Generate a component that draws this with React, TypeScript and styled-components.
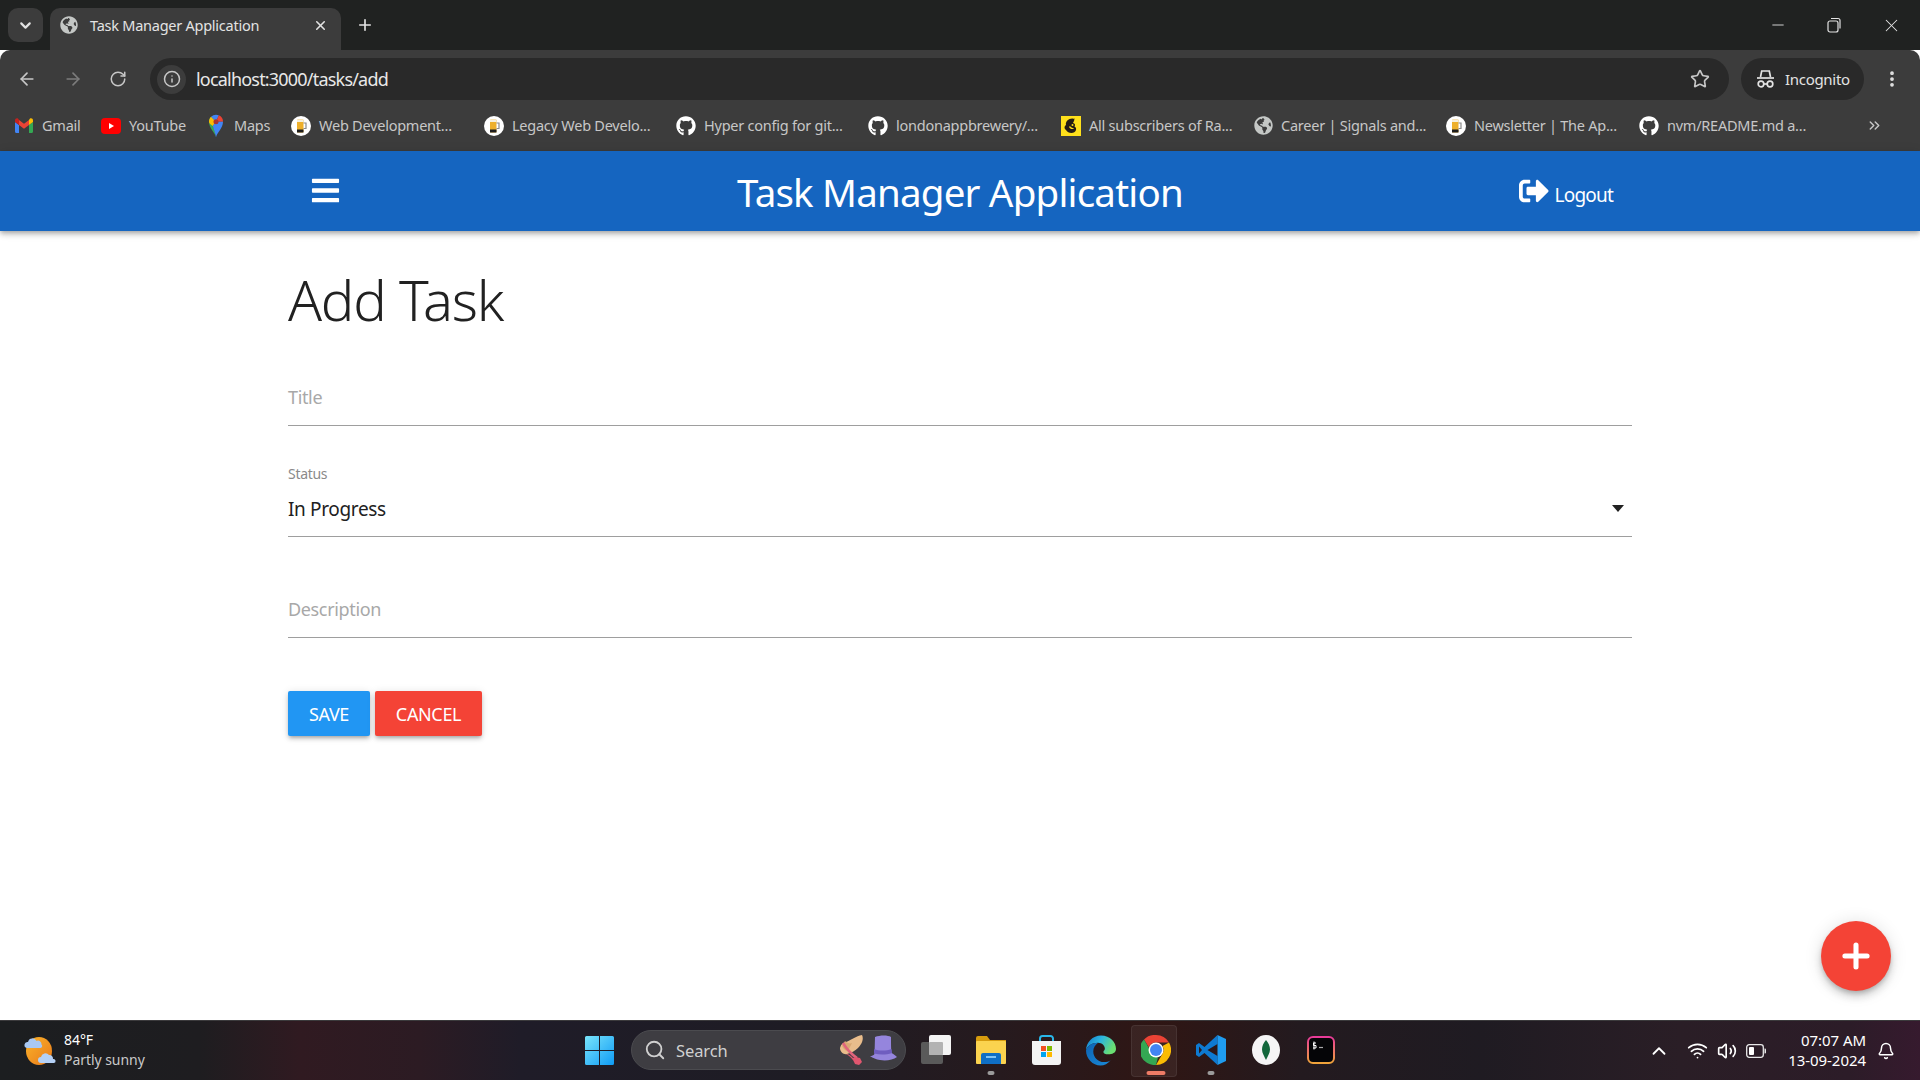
import React from 'react'
import styled, { createGlobalStyle } from 'styled-components'
import {
  ArrowLeft,
  ArrowRight,
  Bell,
  ChevronDown,
  ChevronUp,
  ChevronsRight,
  Info,
  Minus,
  MoreVertical,
  Plus,
  RotateCw,
  Search,
  Star,
  Volume2,
  Wifi,
  X,
} from 'lucide-react'
import { FaBars, FaGithub, FaGlobeAmericas, FaSignOutAlt } from 'react-icons/fa'

const UI_FONT = `'Noto Sans', 'Open Sans', sans-serif`

const GlobalStyle = createGlobalStyle`
  html, body {
    margin: 0;
    padding: 0;
    background: #fff;
    font-family: ${UI_FONT};
    overflow: hidden;
  }
  * { box-sizing: border-box; }
`

const Screen = styled.div`
  width: 1920px;
  height: 1080px;
  display: flex;
  flex-direction: column;
  overflow: hidden;
`

/* browser chrome */
const TabStrip = styled.div`
  height: 50px;
  flex: none;
  background: #202221;
  display: flex;
  align-items: flex-end;
  padding-left: 8px;
  color: #e3e3e3;
`
const TabSearch = styled.div`
  width: 35px;
  height: 34px;
  margin-bottom: 8px;
  border-radius: 10px;
  background: #3c3c3c;
  display: flex;
  align-items: center;
  justify-content: center;
`
const Tab = styled.div`
  width: 291px;
  height: 42px;
  margin-left: 7px;
  border-radius: 10px 10px 0 0;
  background: #3c3c3c;
  display: flex;
  align-items: center;
  padding: 0 13px 8px 10px;
  font-size: 14.5px;
  letter-spacing: -0.25px;
`
const TabTitle = styled.span`
  flex: 1;
  margin-left: 12px;
  white-space: nowrap;
`
const NewTab = styled.div`
  margin: 0 0 16px 15px;
  display: flex;
`
const WindowControls = styled.div`
  margin-left: auto;
  height: 50px;
  display: flex;
  align-items: center;
  gap: 39px;
  padding-right: 18px;
`
const RestoreIcon = () => (
  <svg width="16" height="18" viewBox="0 0 16 18" fill="none" stroke="#e3e3e3" strokeWidth="1.2">
    <rect x="2" y="5" width="10" height="11" rx="2" />
    <path d="M5 2.5h7a2 2 0 0 1 2 2v8" />
  </svg>
)

const Toolbar = styled.div`
  height: 50px;
  flex: none;
  background: #3c3c3c;
  border-radius: 10px 10px 0 0;
  display: flex;
  align-items: flex-start;
  padding-top: 8px;
  color: #c7c7c7;
`
const NavButtons = styled.div`
  width: 150px;
  height: 42px;
  display: flex;
  align-items: center;
  padding-left: 17px;
  gap: 26px;
  flex: none;
`
const AddressBar = styled.div`
  width: 1579px;
  height: 42px;
  border-radius: 21px;
  background: #292929;
  display: flex;
  align-items: center;
  padding: 0 19px 0 7px;
`
const InfoChip = styled.div`
  width: 29px;
  height: 29px;
  border-radius: 50%;
  background: #3c3c3c;
  display: flex;
  align-items: center;
  justify-content: center;
  flex: none;
`
const Url = styled.span`
  flex: 1;
  margin-left: 10px;
  font-size: 18px;
  letter-spacing: -0.8px;
  color: #e8e8e8;
`
const IncognitoPill = styled.div`
  width: 123px;
  height: 42px;
  margin-left: 12px;
  border-radius: 21px;
  background: #292929;
  display: flex;
  align-items: center;
  padding-left: 15px;
  gap: 10px;
  font-size: 15px;
  letter-spacing: -0.3px;
  color: #e3e3e3;
`
const MoreButton = styled.div`
  height: 42px;
  margin-left: 18px;
  display: flex;
  align-items: center;
  color: #e3e3e3;
`
const IncognitoIcon = () => (
  <svg width="19" height="20" viewBox="0 0 19 20" fill="none" stroke="#e3e3e3" strokeWidth="1.7">
    <path d="M4.5 8l1.2-6h7.6l1.2 6" />
    <path d="M1 9h17" />
    <circle cx="5" cy="15" r="2.8" />
    <circle cx="14" cy="15" r="2.8" />
    <path d="M7.8 15h3.4" />
  </svg>
)

const BookmarkBar = styled.div`
  height: 51px;
  flex: none;
  background: #3c3c3c;
  display: flex;
  align-items: center;
  padding-left: 14px;
`
const Bookmark = styled.div<{ $w: number }>`
  width: ${({ $w }) => $w}px;
  flex: none;
  display: flex;
  align-items: center;
`
const BookmarkIcon = styled.div`
  width: 20px;
  height: 20px;
  flex: none;
  display: flex;
  align-items: center;
  justify-content: center;
  color: #fff;
`
const BookmarkLabel = styled.span`
  margin-left: 8px;
  margin-top: -2px;
  font-size: 14.5px;
  letter-spacing: -0.24px;
  color: #c7c7c7;
  white-space: nowrap;
`
const OverflowButton = styled.div`
  margin-left: auto;
  margin-right: 37px;
  display: flex;
  color: #c7c7c7;
`

const GmailIcon = () => (
  <svg width="18" height="15" viewBox="0 0 18 15">
    <path d="M1 15h3V7L0 4v9.5A1.5 1.5 0 0 0 1 15z" fill="#4285f4" />
    <path d="M14 15h3a1.5 1.5 0 0 0 1-1.5V4l-4 3z" fill="#34a853" />
    <path d="M14 2v5l4-3V2.2C18 .6 16.2-.3 15 .6z" fill="#fbbc04" />
    <path d="M4 7V2l5 3.8L14 2v5l-5 3.8z" fill="#ea4335" />
    <path d="M0 2.2V4l4 3V2L3 .6C1.8-.3 0 .6 0 2.2z" fill="#c5221f" />
  </svg>
)
const YoutubeIcon = () => (
  <svg width="20" height="16" viewBox="0 0 20 16">
    <rect width="20" height="16" rx="4" fill="#f00" />
    <path d="M8 5l5 3-5 3z" fill="#fff" />
  </svg>
)
const MapsIcon = () => (
  <svg width="14" height="24" viewBox="0 0 15 24">
    <path d="M7.5 24C6.5 19 0 14.5 0 7.5c0-2 .8-3.9 2.2-5.3L7.5 7.5 4 12c1.5 3 2.8 6 3.5 12z" fill="#34a853" />
    <path d="M2.2 2.2L7.5 7.5 4 12C2 10.5 0 9.5 0 7.5c0-2 .8-3.9 2.2-5.3z" fill="#fbbc04" />
    <path d="M2.2 2.2A7.5 7.5 0 0 1 7.5 0c1 0 2 .2 3 .6L7.5 7.5z" fill="#4285f4" />
    <path d="M10.5 .6A7.5 7.5 0 0 1 15 7.5L7.5 7.5z" fill="#ea4335" />
    <path d="M15 7.5c0 7-6.5 11.5-7.5 16.5-.4-3-1.5-6-3.5-12l3.5-4.5z" fill="#4285f4" />
    <circle cx="7.5" cy="7.5" r="2.7" fill="#a33" />
  </svg>
)
const BeerIcon = () => (
  <svg width="20" height="20" viewBox="0 0 20 20">
    <circle cx="10" cy="10" r="10" fill="#fff" />
    <rect x="6" y="3.5" width="6.5" height="13" rx="0.8" fill="#eeb02b" />
    <rect x="6" y="3.5" width="6.5" height="2.5" fill="#f7f0dc" />
    <rect x="6" y="13.5" width="6.5" height="3" fill="#1d1d1d" />
    <path d="M12.5 7h2.5v5.5h-2.5" fill="none" stroke="#8a8a8a" strokeWidth="1.2" />
  </svg>
)
const MailchimpIcon = () => (
  <svg width="20" height="20" viewBox="0 0 20 20">
    <rect width="20" height="20" fill="#ffe01b" />
    <path d="M14 3C9 1 4 5 5 9c-2 1-2 4 0 5 2 4 9 4 10 0 .6-2-.5-3-1.5-3.5 1-2 .5-3-1.5-3.5 1-1.5 1.5-3 1.5-4.5z" fill="#241c15" />
    <path d="M8 11c1 2 4 3 5 1-2 0-3-.5-4-2z" fill="#ffe01b" />
    <circle cx="11.5" cy="9" r="1" fill="#ffe01b" />
  </svg>
)

/* app bar */
const AppBar = styled.header`
  height: 80px;
  flex: none;
  background: #1565c0;
  box-shadow: 0 2px 4px -1px rgba(0, 0, 0, 0.2), 0 4px 5px 0 rgba(0, 0, 0, 0.14), 0 1px 10px 0 rgba(0, 0, 0, 0.12);
  position: relative;
  z-index: 1;
  color: #fff;
  display: flex;
  justify-content: center;
`
const AppBarInner = styled.div`
  width: 1344px;
  display: grid;
  grid-template-columns: 1fr auto 1fr;
  align-items: center;
`
const MenuButton = styled.div`
  padding-left: 22px;
  margin-top: -2px;
  display: flex;
`
const AppTitle = styled.div`
  font-size: 38.5px;
  letter-spacing: -0.8px;
  line-height: 1;
  margin-top: 2px;
  white-space: nowrap;
`
const LogoutLink = styled.div`
  justify-self: end;
  margin-right: 19px;
  margin-top: 8px;
  display: flex;
  align-items: center;
  gap: 6px;
  font-size: 19px;
  letter-spacing: -0.8px;
`
const LogoutIcon = styled(FaSignOutAlt)`
  margin-top: -8px;
`

/* form */
const Main = styled.main`
  flex: 1;
  width: 1344px;
  margin: 0 auto;
  padding-top: 26px;
`
const Heading = styled.h1`
  margin: 0;
  font-size: 56px;
  line-height: 84px;
  font-weight: 300;
  letter-spacing: -1.2px;
  color: #212121;
`
const Field = styled.div<{ $h: number; $mt: number }>`
  height: ${({ $h }) => $h}px;
  margin-top: ${({ $mt }) => $mt}px;
  border-bottom: 1px solid #9e9e9e;
  display: flex;
  flex-direction: column;
  justify-content: flex-end;
  position: relative;
`
const Placeholder = styled.span`
  font-size: 18px;
  letter-spacing: -0.35px;
  line-height: 26px;
  padding-bottom: 15px;
  color: #a8a8a8;
`
const FieldLabel = styled.span`
  font-size: 14px;
  letter-spacing: -0.3px;
  line-height: 18px;
  margin-bottom: 13px;
  color: #8a8a8a;
`
const SelectValue = styled.span`
  font-size: 19px;
  letter-spacing: -0.35px;
  line-height: 26px;
  padding-bottom: 14px;
  color: #212121;
`
const SelectArrow = styled.span`
  position: absolute;
  right: 8px;
  bottom: 24px;
  width: 0;
  height: 0;
  border-left: 6.5px solid transparent;
  border-right: 6.5px solid transparent;
  border-top: 7px solid #212121;
`
const Actions = styled.div`
  margin-top: 53px;
  display: flex;
  gap: 5px;
`
const ActionButton = styled.button<{ $bg: string; $w: number }>`
  width: ${({ $w }) => $w}px;
  height: 45px;
  padding: 0;
  border: none;
  border-radius: 2px;
  background: ${({ $bg }) => $bg};
  color: #fff;
  font-family: ${UI_FONT};
  font-size: 18px;
  letter-spacing: -0.35px;
  box-shadow: 0 3px 3px -2px rgba(0, 0, 0, 0.2), 0 3px 4px 0 rgba(0, 0, 0, 0.14), 0 1px 8px 0 rgba(0, 0, 0, 0.12);
`
const Fab = styled.div`
  position: fixed;
  left: 1821px;
  top: 921px;
  width: 70px;
  height: 70px;
  border-radius: 50%;
  background: #f44336;
  color: #fff;
  display: flex;
  align-items: center;
  justify-content: center;
  box-shadow: 0 3px 5px -1px rgba(0, 0, 0, 0.2), 0 6px 10px 0 rgba(0, 0, 0, 0.14), 0 1px 18px 0 rgba(0, 0, 0, 0.12);
`

/* windows taskbar */
const Taskbar = styled.footer`
  height: 60px;
  flex: none;
  border-top: 1px solid #3b3a3c;
  background: linear-gradient(
    90deg,
    #1c1e20 0,
    #1e1d20 200px,
    #301a21 300px,
    #2c1b23 420px,
    #1f1c28 520px,
    #1e1c24 800px,
    #261a1e 1000px,
    #2f1614 1160px,
    #231a1f 1300px,
    #1f1b22 1480px,
    #2a1e26 1680px,
    #2c1c28 1850px,
    #361a2e 1920px
  );
  display: flex;
  align-items: center;
  color: #fff;
`
const Weather = styled.div`
  width: 585px;
  flex: none;
  display: flex;
  align-items: center;
  padding-left: 24px;
  gap: 8px;
`
const WeatherText = styled.div`
  display: flex;
  flex-direction: column;
  margin-top: -2px;
  font-size: 14px;
  letter-spacing: -0.05px;
  line-height: 20px;
`
const WeatherSub = styled.span`
  color: #c9c9c9;
`
const SearchBox = styled.div`
  width: 275px;
  height: 40px;
  margin-left: 17px;
  margin-bottom: 1px;
  border-radius: 20px;
  border: 1px solid #4b4b4f;
  background: #3e3d42;
  display: flex;
  align-items: center;
  padding: 0 7px 0 12px;
  color: #d0d0d0;
  font-size: 16.5px;
  letter-spacing: -0.1px;
  flex: none;
`
const SearchLabel = styled.span`
  flex: 1;
  margin-left: 10px;
`
const TaskIcons = styled.div`
  display: flex;
  gap: 25px;
  margin-left: 15px;
  margin-bottom: 1px;
  flex: none;
`
const TaskSlot = styled.div<{ $active?: boolean }>`
  width: 30px;
  height: 30px;
  position: relative;
  display: flex;
  align-items: center;
  justify-content: center;
  z-index: 0;
  &::before {
    content: '';
    display: ${({ $active }) => ($active ? 'block' : 'none')};
    position: absolute;
    z-index: -1;
    left: -10px;
    top: -10px;
    width: 44px;
    height: 50px;
    border-radius: 4px;
    border: 1px solid rgba(255, 255, 255, 0.07);
    background: rgba(255, 255, 255, 0.06);
  }
`
const TaskDot = styled.span<{ $active?: boolean }>`
  position: absolute;
  left: 50%;
  top: 36px;
  height: 4px;
  width: ${({ $active }) => ($active ? 19 : 7)}px;
  transform: translateX(-50%);
  border-radius: 2px;
  background: ${({ $active }) => ($active ? '#ee7c66' : '#9b9b9b')};
`
const Tray = styled.div`
  margin-left: auto;
  display: flex;
  align-items: center;
  padding-right: 25px;
`
const TrayIcons = styled.div`
  display: flex;
  align-items: center;
  gap: 9px;
  margin-right: 22px;
`
const TrayChevron = styled.div`
  display: flex;
  margin-right: 17px;
`
const Clock = styled.div`
  text-align: right;
  font-size: 15px;
  line-height: 20px;
  letter-spacing: -0.05px;
  margin-top: -2px;
  margin-right: 11px;
`

const WeatherIcon = () => (
  <svg width="32" height="32" viewBox="0 0 32 32">
    <defs>
      <linearGradient id="sun" x1="0" y1="0" x2="1" y2="1">
        <stop offset="0" stopColor="#fbb42a" />
        <stop offset="1" stopColor="#e8791a" />
      </linearGradient>
    </defs>
    <ellipse cx="15" cy="16" rx="13" ry="14" fill="url(#sun)" />
    <path d="M3 13a3 3 0 0 1 1-6 4.5 4.5 0 0 1 8.5-1 3.5 3.5 0 0 1 5 3.5 2 2 0 0 1-1 3.5z" fill="#a9c8f2" />
    <path d="M17 28a3 3 0 0 1 0-6 4.5 4.5 0 0 1 8-2 3.5 3.5 0 0 1 4 4 2 2 0 0 1 1 4z" fill="#b4d0f5" />
  </svg>
)
const StartIcon = () => (
  <svg width="29" height="29" viewBox="0 0 29 29">
    <defs>
      <linearGradient id="win" x1="0" y1="0" x2="1" y2="1">
        <stop offset="0" stopColor="#79e4fb" />
        <stop offset="1" stopColor="#0f9bf5" />
      </linearGradient>
    </defs>
    <path d="M0 1.5A1.5 1.5 0 0 1 1.5 0H14v14H0zM15 0h12.5A1.5 1.5 0 0 1 29 1.5V14H15zM0 15h14v14H1.5A1.5 1.5 0 0 1 0 27.5zM15 15h14v12.5a1.5 1.5 0 0 1-1.5 1.5H15z" fill="url(#win)" />
  </svg>
)
const SearchHats = () => (
  <svg width="60" height="32" viewBox="0 0 60 32">
    <path d="M2 14c1-4 3-5 6-6 5-2 10-6 16-7 2 4 0 9-4 13-3 3-7 5-11 6-3 1-7-2-7-6z" fill="#e9bd8c" />
    <path d="M7 7c2 2 5 3 7 2l-4 8c-3 0-5-3-6-5z" fill="#d9a873" />
    <path d="M5 9c3 5 8 11 14 15" stroke="#e0647c" strokeWidth="2.6" fill="none" />
    <path d="M8 20c4 2 7 5 9 10l4 1 3-3-2-4-5-1-2 1c-2-2-4-4-7-4z" fill="#e0566f" />
    <path d="M37 3c5-2 13-2 16 0 0 6 0 12 .5 16 2 1 3.5 2 5.5 4-4 3-11 4-17 3-4-.5-7-2-10-4 2 0 3.5-.5 4.5-2z" fill="#9585dd" />
    <path d="M36 15c5 2 12 2 17.5 0l.5 4c-6 2-12 2-18 .5z" fill="#6f5dc0" />
  </svg>
)
const TaskViewIcon = () => (
  <svg width="30" height="30" viewBox="0 0 30 30">
    <rect x="0" y="7" width="22" height="22" rx="2" fill="#5a5a5a" />
    <rect x="8" y="0" width="22" height="20" rx="2" fill="#f4f4f4" />
    <rect x="8" y="7" width="14" height="13" rx="1" fill="#b3b3b3" />
  </svg>
)
const ExplorerIcon = () => (
  <svg width="30" height="28" viewBox="0 0 30 28">
    <path d="M0 2a2 2 0 0 1 2-2h9l3 4h16v6H0z" fill="#d79c0e" />
    <rect y="5" width="30" height="23" rx="1" fill="#fbd34f" />
    <path d="M5 28v-9a2 2 0 0 1 2-2h16a2 2 0 0 1 2 2v9z" fill="#0f6fc5" />
    <rect x="10" y="20" width="10" height="2" fill="#7fc4f5" />
  </svg>
)
const StoreIcon = () => (
  <svg width="29" height="30" viewBox="0 0 29 30">
    <path d="M8 8V3.5a2.5 2.5 0 0 1 2.5-2.5h8a2.5 2.5 0 0 1 2.5 2.5V8" fill="none" stroke="#29b6e8" strokeWidth="2" />
    <path d="M0 6h29v21a3 3 0 0 1-3 3H3a3 3 0 0 1-3-3z" fill="#f3f3f3" />
    <rect x="9" y="11" width="5" height="5" fill="#f25022" />
    <rect x="15" y="11" width="5" height="5" fill="#7fba00" />
    <rect x="9" y="17" width="5" height="5" fill="#00a4ef" />
    <rect x="15" y="17" width="5" height="5" fill="#ffb900" />
  </svg>
)
const EdgeIcon = () => (
  <svg width="31" height="31" viewBox="0 0 31 31">
    <defs>
      <linearGradient id="edgeTop" x1="0" y1="0" x2="1" y2="0.4">
        <stop offset="0" stopColor="#1477c9" />
        <stop offset="0.5" stopColor="#2bb5e0" />
        <stop offset="1" stopColor="#6ade72" />
      </linearGradient>
      <linearGradient id="edgeLow" x1="0" y1="0" x2="1" y2="1">
        <stop offset="0" stopColor="#0d62b2" />
        <stop offset="1" stopColor="#1a8ad8" />
      </linearGradient>
    </defs>
    <path d="M15.5 0C25 0 31 7 31 14c0 4-4 5.5-8 5.5-3 0-5-1-5-2.5 0-1.5 1.5-1.5 1.5-3.5 0-3-3-6-7-6C6 7.5 1 11 0 15.5 0 7 7 0 15.5 0z" fill="url(#edgeTop)" />
    <path d="M0 15.5C1 11 6 7.5 12.5 7.5c-3 2-5 5-5 9 0 6 5 11 11 11 3 0 5-.5 7-2-3 3.5-6.5 5.5-10.5 5.5C7 31 0 24 0 15.5z" fill="url(#edgeLow)" />
  </svg>
)
const ChromeIcon = () => (
  <svg width="30" height="30" viewBox="0 0 30 30">
    <path d="M15 0a15 15 0 0 1 13 7.5H15a7.5 7.5 0 0 0-7 5L3 4.5A15 15 0 0 1 15 0z" fill="#ea4335" />
    <path d="M28 7.5A15 15 0 0 1 15 30l6.5-11.3A7.5 7.5 0 0 0 21.5 11z" fill="#fbbc04" />
    <path d="M15 30A15 15 0 0 1 3 4.5l6.5 11.3A7.5 7.5 0 0 0 17 22.3z" fill="#34a853" />
    <circle cx="15" cy="15" r="7.5" fill="#fff" />
    <circle cx="15" cy="15" r="6" fill="#4285f4" />
  </svg>
)
const VscodeIcon = () => (
  <svg width="30" height="30" viewBox="0 0 30 30">
    <path d="M21.5 0L8.5 12 3 8 0 10v10l3 2 5.5-4 13 12v-9l-10-6 10-6z" fill="#0e7ad1" />
    <path d="M3 11.5L6 15l-3 3.5z" fill="#2a1a1e" />
    <path d="M21.5 0L30 4v22l-8.5 4z" fill="#1f9cf0" />
  </svg>
)
const MongoIcon = () => (
  <svg width="30" height="30" viewBox="0 0 30 30">
    <ellipse cx="15" cy="15" rx="14" ry="15" fill="#f5f5f5" />
    <path d="M15 5c2.5 3 4 6 4 9.5 0 3.5-2.5 7-4 10.5-1.5-3.5-4-7-4-10.5C11 11 12.5 8 15 5z" fill="#13683c" />
  </svg>
)
const TerminalIcon = () => (
  <svg width="30" height="30" viewBox="0 0 30 30">
    <defs>
      <linearGradient id="term" x1="0" y1="0" x2="0" y2="1">
        <stop offset="0" stopColor="#e93a9a" />
        <stop offset="1" stopColor="#f0a43a" />
      </linearGradient>
    </defs>
    <rect x="2" y="2" width="26" height="26" rx="5" fill="#050507" stroke="url(#term)" strokeWidth="2" />
    <path d="M8 6.5v8M10 8H7.5v2.5H10V13H7" fill="none" stroke="#fff" strokeWidth="1" />
    <path d="M13 12.5h4" stroke="#aaa" strokeWidth="1.2" />
  </svg>
)
const BatteryIcon = () => (
  <svg width="20" height="14" viewBox="0 0 20 14" fill="none">
    <rect x="0.7" y="0.7" width="16.6" height="12.6" rx="2.5" stroke="#e8e8e8" strokeWidth="1.3" />
    <rect x="3" y="3" width="5" height="8" rx="1" fill="#fff" />
    <path d="M18.5 4.5h.5a1 1 0 0 1 1 1v3a1 1 0 0 1-1 1h-.5z" fill="#e8e8e8" />
  </svg>
)

const bookmarks = [
  { label: 'Gmail', w: 87, icon: <GmailIcon /> },
  { label: 'YouTube', w: 105, icon: <YoutubeIcon /> },
  { label: 'Maps', w: 85, icon: <MapsIcon /> },
  { label: 'Web Development...', w: 193, icon: <BeerIcon /> },
  { label: 'Legacy Web Develo...', w: 192, icon: <BeerIcon /> },
  { label: 'Hyper config for git...', w: 192, icon: <FaGithub size={20} /> },
  { label: 'londonappbrewery/...', w: 193, icon: <FaGithub size={20} /> },
  { label: 'All subscribers of Ra...', w: 192, icon: <MailchimpIcon /> },
  { label: 'Career | Signals and...', w: 193, icon: <FaGlobeAmericas size={19} color="#c4c7c5" /> },
  { label: 'Newsletter | The Ap...', w: 193, icon: <BeerIcon /> },
  { label: 'nvm/README.md a...', w: 170, icon: <FaGithub size={20} /> },
]

const App = () => {
  return (
    <Screen>
      <GlobalStyle />
      <TabStrip>
        <TabSearch>
          <ChevronDown size={17} strokeWidth={3} />
        </TabSearch>
        <Tab>
          <FaGlobeAmericas size={18} color="#c4c7c5" />
          <TabTitle>Task Manager Application</TabTitle>
          <X size={15} strokeWidth={2.5} />
        </Tab>
        <NewTab>
          <Plus size={18} strokeWidth={2.2} />
        </NewTab>
        <WindowControls>
          <Minus size={18} strokeWidth={1.2} />
          <RestoreIcon />
          <X size={21} strokeWidth={1.2} />
        </WindowControls>
      </TabStrip>

      <Toolbar>
        <NavButtons>
          <ArrowLeft size={20} />
          <ArrowRight size={20} color="#7c7c7c" />
          <RotateCw size={18} />
        </NavButtons>
        <AddressBar>
          <InfoChip>
            <Info size={18} />
          </InfoChip>
          <Url>localhost:3000/tasks/add</Url>
          <Star size={20} />
        </AddressBar>
        <IncognitoPill>
          <IncognitoIcon />
          Incognito
        </IncognitoPill>
        <MoreButton>
          <MoreVertical size={20} strokeWidth={2.5} />
        </MoreButton>
      </Toolbar>

      <BookmarkBar>
        {bookmarks.map((b) => (
          <Bookmark key={b.label} $w={b.w}>
            <BookmarkIcon>{b.icon}</BookmarkIcon>
            <BookmarkLabel>{b.label}</BookmarkLabel>
          </Bookmark>
        ))}
        <OverflowButton>
          <ChevronsRight size={17} />
        </OverflowButton>
      </BookmarkBar>

      <AppBar>
        <AppBarInner>
          <MenuButton>
            <FaBars size={31} />
          </MenuButton>
          <AppTitle>Task Manager Application</AppTitle>
          <LogoutLink>
            <LogoutIcon size={30} />
            Logout
          </LogoutLink>
        </AppBarInner>
      </AppBar>

      <Main>
        <Heading>Add Task</Heading>
        <Field $h={62} $mt={23}>
          <Placeholder>Title</Placeholder>
        </Field>
        <Field $h={90} $mt={21}>
          <FieldLabel>Status</FieldLabel>
          <SelectValue>In Progress</SelectValue>
          <SelectArrow />
        </Field>
        <Field $h={62} $mt={39}>
          <Placeholder>Description</Placeholder>
        </Field>
        <Actions>
          <ActionButton $bg="#2196f3" $w={82}>SAVE</ActionButton>
          <ActionButton $bg="#f44336" $w={107}>CANCEL</ActionButton>
        </Actions>
      </Main>

      <Fab>
        <Plus size={38} strokeWidth={3.2} />
      </Fab>

      <Taskbar>
        <Weather>
          <WeatherIcon />
          <WeatherText>
            <span>84°F</span>
            <WeatherSub>Partly sunny</WeatherSub>
          </WeatherText>
        </Weather>
        <StartIcon />
        <SearchBox>
          <Search size={22} />
          <SearchLabel>Search</SearchLabel>
          <SearchHats />
        </SearchBox>
        <TaskIcons>
          <TaskSlot><TaskViewIcon /></TaskSlot>
          <TaskSlot><ExplorerIcon /><TaskDot /></TaskSlot>
          <TaskSlot><StoreIcon /></TaskSlot>
          <TaskSlot><EdgeIcon /></TaskSlot>
          <TaskSlot $active><ChromeIcon /><TaskDot $active /></TaskSlot>
          <TaskSlot><VscodeIcon /><TaskDot /></TaskSlot>
          <TaskSlot><MongoIcon /></TaskSlot>
          <TaskSlot><TerminalIcon /></TaskSlot>
        </TaskIcons>
        <Tray>
          <TrayChevron>
            <ChevronUp size={22} strokeWidth={2} />
          </TrayChevron>
          <TrayIcons>
            <Wifi size={21} />
            <Volume2 size={20} />
            <BatteryIcon />
          </TrayIcons>
          <Clock>
            07:07 AM
            <br />
            13-09-2024
          </Clock>
          <Bell size={18} />
        </Tray>
      </Taskbar>
    </Screen>
  )
}

export default App
